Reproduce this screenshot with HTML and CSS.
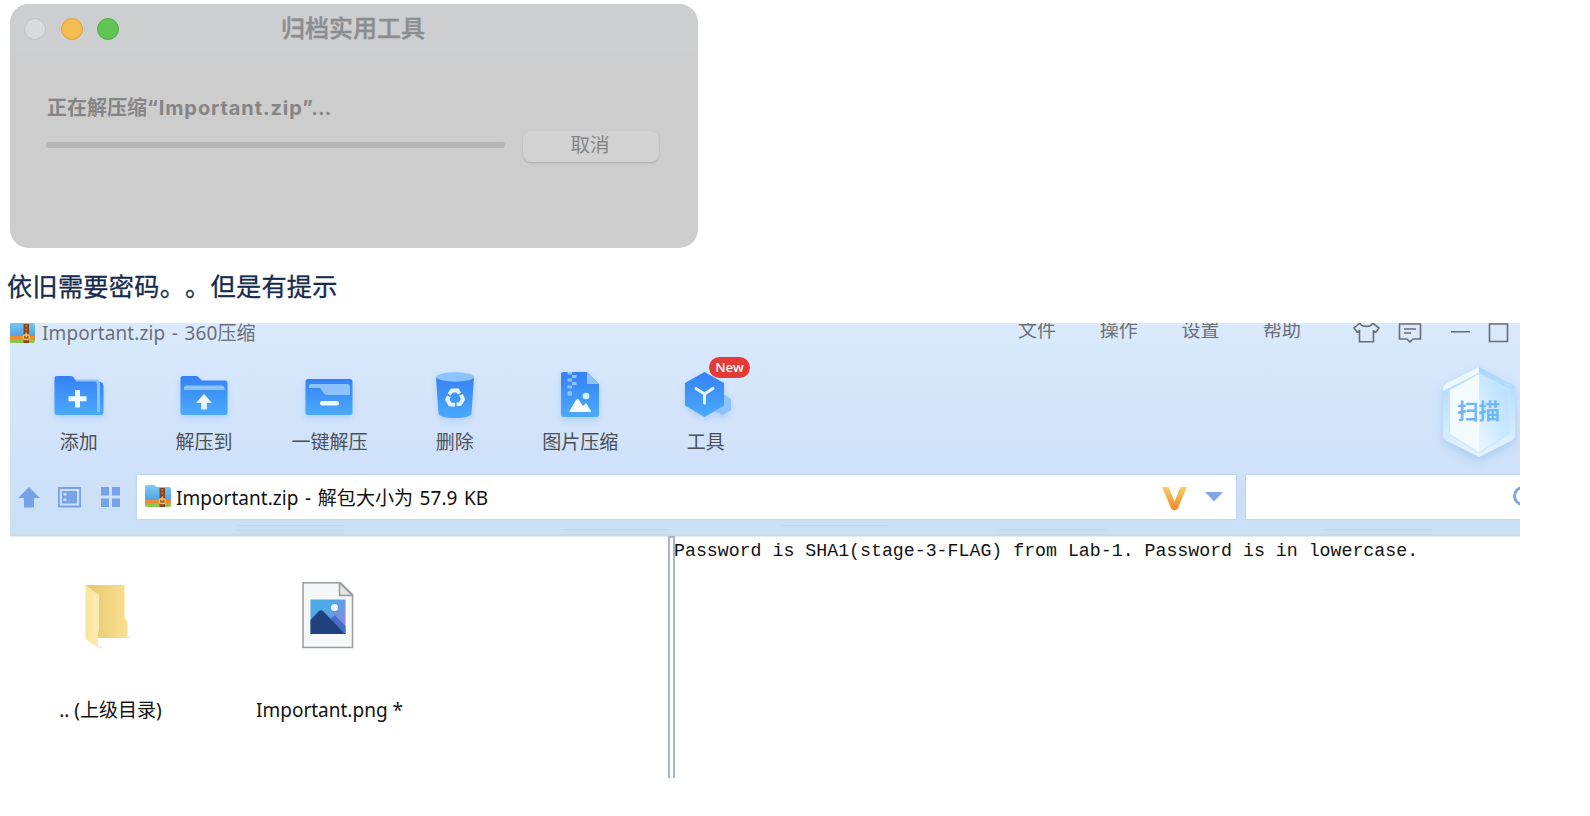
FILE: index.html
```html
<!DOCTYPE html>
<html lang="zh-CN">
<head>
<meta charset="utf-8">
<title>Important.zip</title>
<link rel="stylesheet" href="styles.css">
</head>
<body>
<svg class="defs" width="0" height="0" aria-hidden="true">
  <defs>
    <linearGradient id="blue" x1="0" y1="0" x2="0" y2="1"><stop offset="0" stop-color="#3681f4"/><stop offset="1" stop-color="#4aaafb"/></linearGradient>
    <linearGradient id="sky" x1="0" y1="0" x2="0" y2="1"><stop offset="0" stop-color="#7cccf3"/><stop offset="1" stop-color="#4d9de2"/></linearGradient>
    <linearGradient id="white" x1="0" y1="0" x2="0" y2="1"><stop offset="0" stop-color="#fff"/><stop offset="1" stop-color="#d9efff"/></linearGradient>
    <symbol id="archive" viewBox="0 0 26 22">
      <path d="M0 2Q0 0 2 0H9L12 2H24Q26 2 26 4V17H0Z" fill="url(#sky)"/>
      <path d="M0 15H26V19H0Z" fill="#ee8b36"/>
      <path d="M0 18.500H26V20Q26 22 24 22H2Q0 22 0 20Z" fill="#8dc64a"/>
      <path d="M14.500 3H20V22H14.500Z" fill="#874521"/>
      <path d="M17.200 4V11" stroke="#c48a4b" stroke-width="1.200" stroke-dasharray="2 1.500"/>
      <rect x="14.300" y="14" width="6" height="4.500" rx="1.500" fill="#a8602a" stroke="#f5c468" stroke-width="1.300"/>
      <path d="M17.300 11.500V16" stroke="#f5c468" stroke-width="1.600"/>
    </symbol>
  </defs>
</svg>

<section class="dialog">
  <header class="dialog-bar">
    <div class="lights"><i class="light off"></i><i class="light amber"></i><i class="light green"></i></div>
    <h1 class="dialog-title">归档实用工具</h1>
  </header>
  <p class="message">正在解压缩<span class="latin">“Important.zip”…</span></p>
  <div class="progress-row"><div class="progress"></div><button class="cancel">取消</button></div>
</section>

<p class="note">依旧需要密码。。但是有提示</p>

<section class="window">
  <div class="head">
    <div class="titlebar">
      <svg class="title-icon" width="26" height="22"><use href="#archive"/></svg>
      <span class="title-text">Important.zip - 360压缩</span>
      <nav class="menu"><span>文件</span><span>操作</span><span>设置</span><span>帮助</span></nav>
      <svg class="controls" width="156" height="22" fill="none" stroke="#686d75" stroke-width="1.600">
        <path d="M7 0L1 5L4 9L6.500 8V18.800H20.500V8L23 9L26 5L19.500 0C18.500 4.500 8.500 4.500 7 0Z"/>
        <path d="M46.500 1H67.500V16H60L57 19L54 16H46.500ZM51 6H63M51 10H58"/>
        <path d="M98 8.800H117M136.500 1H154.500V18.500H136.500Z"/>
      </svg>
    </div>
    <div class="main-row">
      <div class="tools">
        <div class="tool"><svg width="50" height="48" viewBox="0 0 50 48">
          <path d="M40 6H47Q49.500 7 49.500 10V36Q49.500 39 47 39H40Z" fill="url(#blue)"/>
          <path d="M20 3.500H43Q46 3.500 46 7V36H20Z" fill="#8cc3fc"/>
          <path d="M.5 2Q.5 0 3 0H17Q19 0 20 2L22.500 5.500H41Q43 5.500 43 8V36Q43 39 46 39H3Q.5 39 .5 36Z" fill="url(#blue)"/>
          <path d="M23.500 14V31.500M14.500 22.800H32.500" stroke="#eefaff" stroke-width="5"/></svg><span>添加</span></div>
        <div class="tool"><svg width="48" height="48" viewBox="0 0 48 48">
          <path d="M.5 2Q.5 0 3 0H17L22 4.500H45Q47.500 4.500 47.500 7V36Q47.500 39 45 39H3Q.5 39 .5 36Z" fill="url(#blue)"/>
          <path d="M4 14V11Q4 9.500 6 9.500H42Q44.500 9.500 44.500 12V14Z" fill="#8cc3fc"/>
          <path d="M24 18L32 27H27V33.500H21V27H16Z" fill="url(#white)"/></svg><span>解压到</span></div>
        <div class="tool"><svg width="48" height="48" viewBox="0 0 48 48">
          <rect x=".5" y="3" width="47" height="36" rx="2.500" fill="url(#blue)"/>
          <path d="M4 12V10Q4 8 6 8H42Q45 8 45 11V19H22Q20 19 18.500 17L15 12Z" fill="#8cc3fc"/>
          <rect x="15" y="25" width="19" height="4.500" rx="2" fill="#eefaff"/></svg><span>一键解压</span></div>
        <div class="tool tall"><svg width="40" height="52" viewBox="0 0 40 52">
          <path d="M1 5H39L36.500 41Q36 46 20 46Q4 46 3.500 41Z" fill="url(#blue)"/>
          <ellipse cx="20" cy="5" rx="19" ry="4.700" fill="#8cc3fc"/>
          <g fill="none" stroke="#e8f7ff" stroke-width="3.900"><path d="M14.200 22.500L17 18.500H22.500L24.500 21.500"/><path d="M14.200 22.500L17 18.500H22.500L24.500 21.500" transform="rotate(120 20 26)"/><path d="M14.200 22.500L17 18.500H22.500L24.500 21.500" transform="rotate(240 20 26)"/></g></svg><span>删除</span></div>
        <div class="tool tall"><svg width="40" height="52" viewBox="0 0 40 52">
          <path d="M1 2Q1 0 3 0H27L39 12V42Q39 45 36.500 45H3.500Q1 45 1 42Z" fill="url(#blue)"/>
          <path d="M27 0L39 12H27Z" fill="#8cc3fc"/>
          <path d="M7.500 1H12M12 4.500H16.500M7.500 8H12M12 11.500H16.500M7.500 15H12" stroke="#8cc3fc" stroke-width="3"/><rect x="7.500" y="19" width="4.500" height="5" rx="1.500" fill="#8cc3fc"/>
          <circle cx="26" cy="24" r="3.300" fill="#d9efff"/><path d="M9 40L16 28Q17.500 26 19 28L23 34L26 31L31 39V40Z" fill="#f5fbff"/></svg><span>图片压缩</span></div>
        <div class="tool tall"><svg class="hex" width="50" height="52" viewBox="0 0 50 52">
          <path d="M34 23L42 23L48 27V38L39.500 43L31 39Z" fill="#8cc3fc"/>
          <path d="M21.500 0L41 11V33.500L21.500 45L2 33.500V11Z" fill="url(#blue)"/>
          <path d="M13 16.500L21.500 22L30 16.500M21.500 22V31" fill="none" stroke="#e5f7ff" stroke-width="3" stroke-linecap="round"/></svg><span>工具</span><b class="badge">New</b></div>
      </div>
      <div class="shield">
        <svg width="74" height="100" viewBox="0 0 74 100">
          <defs><linearGradient id="rim" x1="0" y1="0" x2="0" y2="1"><stop offset="0" stop-color="#a8d6fc"/><stop offset="1" stop-color="#e6f4ff"/></linearGradient>
          <linearGradient id="right" x1="1" y1="0" x2="0" y2="1"><stop offset="0" stop-color="#b1dcff"/><stop offset="1" stop-color="#eaf6ff"/></linearGradient></defs>
          <path d="M37 0L73 19V68Q73 72 69 74L37 90L5 74Q1 71 1 68V21L5 17Z" fill="url(#rim)"/>
          <path d="M37 0L5 16L1 20V24L37 6Z" fill="#eef8ff"/>
          <path d="M37 7L8 23V67L37 86Z" fill="#f4fbff"/>
          <path d="M37 7L67 23V67L37 86Z" fill="url(#right)"/>
          <path d="M37 6.500L7.500 23V67L37 86L67 67V23Z" fill="none" stroke="#c9e6fe" stroke-width="1.200"/>
        </svg><b>扫描</b>
      </div>
    </div>
    <div class="address-row">
      <svg class="nav-icons" width="104" height="22" fill="#76a2e8">
        <path d="M11 0L22 11H16V20.500H6V11H0Z"/>
        <path d="M40.900 1H62.100V19.500H40.900Z" fill="none" stroke="#76a2e8" stroke-width="1.800"/>
        <path d="M44 4H59V16.500H44Z"/><path d="M45.500 6H48.500V8.500H45.500ZM45.500 11.500H48.500V14H45.500Z" fill="#cbdff8"/>
        <path d="M83 0H91V8.500H83ZM94 0H102V8.500H94ZM83 11.500H91V20H83ZM94 11.500H102V20H94Z"/>
      </svg>
      <div class="address">
        <svg width="26" height="22"><use href="#archive"/></svg>
        <span class="address-text">Important.zip - 解包大小为 57.9 KB</span>
        <svg class="address-end" width="64" height="24">
          <defs><linearGradient id="gold" x1="0" y1="0" x2="0" y2="1"><stop offset="0" stop-color="#f8ce60"/><stop offset="1" stop-color="#ef8526"/></linearGradient></defs>
          <path d="M0 0H6.500L12.500 14.500L18.500 0H25L16 21Q12.500 26 9 21Z" fill="url(#gold)"/><path d="M43 5H61L52 14.500Z" fill="#7ea7ea"/>
        </svg>
      </div>
      <div class="search"><svg width="7" height="22"><circle cx="10" cy="10" r="8.500" fill="none" stroke="#7ea7ea" stroke-width="3"/></svg></div>
    </div>
    <div class="head-edge"><svg width="1510" height="15" stroke="#c0d8f0"><path d="M226 6.500H334M226 11.500H334M552 10.500H660M770 6.500H878M988 10.500H1096M1313 10.500H1422"/></svg></div>
  </div>
  <div class="panes">
    <div class="files">
      <div class="file"><svg width="48" height="68" viewBox="0 0 48 68">
        <defs><linearGradient id="fold"><stop offset="0" stop-color="#e6c66d"/><stop offset="1" stop-color="#f9e08f"/></linearGradient><linearGradient id="flap"><stop offset="0" stop-color="#fbe49a"/><stop offset="1" stop-color="#fdebb5"/></linearGradient></defs>
        <path d="M13 64L18 65L14 67ZM42 55L47 54L43 57Z" fill="#e6e6e8"/>
        <path d="M.5 3H39.500V36L42.500 39V56H12V15Z" fill="url(#fold)"/><path d="M.5 3L14 13V49L13 50V66L.5 57Z" fill="url(#flap)"/></svg>
        <span>.. (上级目录)</span></div>
      <div class="file"><svg width="52" height="68" viewBox="0 0 52 68">
        <defs><linearGradient id="photo" x1="0" y1="0" x2="1" y2="1"><stop offset=".35" stop-color="#4fa9e6"/><stop offset="1" stop-color="#a27ad4"/></linearGradient></defs>
        <path d="M1 .8H38.500L50.500 12.500V65.500H1Z" fill="#f6f7f9" stroke="#999c9e" stroke-width="1.500"/>
        <path d="M37.500 .8V13.500H50.500Z" fill="#e5e6e7" stroke="#999c9e" stroke-width="1.500"/>
        <path d="M8.500 17.500H43.500V52H8.500Z" fill="url(#photo)"/><path d="M25 41L32.500 33L43.500 44V52H25Z" fill="#4b6bc9"/><path d="M8.500 38L17 29Q19 27.500 21 29L43 52H8.500Z" fill="#1f4180"/><circle cx="32.500" cy="25.500" r="3.500" fill="#edf5fc"/></svg>
        <span>Important.png *</span></div>
    </div>
    <div class="splitter"></div>
    <pre class="preview">Password is SHA1(stage-3-FLAG) from Lab-1. Password is in lowercase.</pre>
  </div>
</section>
</body>
</html>
```
FILE: styles.css
```css
* { box-sizing: border-box; }
body { margin: 0; padding: 4px 10px 0; height: 816px; overflow: hidden; background: #fff; font-family: "Noto Sans", "Noto Sans CJK SC", sans-serif; }
svg { display: block; flex: none; }
.defs { position: absolute; }
h1, p, pre { margin: 0; }

.dialog { width: 688px; height: 244px; border-radius: 19px; background: #cdcdcd; overflow: hidden; }
.dialog-bar { display: grid; grid-template-columns: 199px 1fr 201px; height: 50px; background: #cdced0; }
.lights { display: flex; align-items: center; gap: 14.500px; padding-left: 14px; }
.light { width: 22px; height: 22px; border-radius: 50%; border: 1px solid; }
.off { background: #d9dadc; border-color: #bfc0c2; }
.amber { background: #f5bd4f; border-color: #dfa239; }
.green { background: #61c554; border-color: #4eae42; }
.dialog-title { color: #8c8d8e; font: 500 24px/45px "Noto Sans CJK SC", sans-serif; text-align: center; -webkit-text-stroke: .4px; }
.message { margin: 38px 0 0 37px; font: 700 20px/30px "Noto Sans CJK SC", sans-serif; color: #858585; white-space: nowrap; }
.latin { font-family: Inter, sans-serif; font-weight: 700; letter-spacing: .9px; }
.progress-row { display: flex; align-items: center; gap: 18px; margin: 8px 0 0 36px; }
.progress { width: 459px; height: 6px; margin-top: -3px; border-radius: 3px; background: #b5b5b5; }
.cancel { width: 136px; height: 31px; padding: 0 2px 5px 0; border: 0; border-radius: 8px; background: #d2d2d2; box-shadow: 0 1px 2px #aaa; color: #858585; font: 19.500px/26px "Noto Sans CJK SC", sans-serif; }

.note { height: 75px; margin-left: -3px; padding-top: 17px; color: #172b4d; font: 400 25.200px/40px "Noto Sans CJK SC", sans-serif; letter-spacing: .25px; text-spacing-trim: space-all; -webkit-text-stroke: .3px; }

.window { width: 1510px; height: 455px; overflow: hidden; }
.head { height: 213px; background: linear-gradient(#daeafc, #d2e3fa 50%, #c8dff6); }
.titlebar { display: flex; height: 23px; color: #6b7077; font-size: 19px; line-height: 20px; }
.title-icon { margin: -2px 1px 0 -1px; }
.title-text { width: 982px; padding-left: 6px; letter-spacing: .1px; word-spacing: 1.500px; white-space: nowrap; }
.menu { display: grid; grid-template-columns: repeat(4, 81.700px); width: 335px; line-height: 15px; }
.main-row { display: flex; justify-content: space-between; height: 129px; }
.tools { display: grid; grid-template-columns: repeat(6, 125.400px); padding: 30px 0 0 6px; }
.tool { position: relative; display: flex; flex-direction: column; align-items: center; color: #4b5057; font-size: 19px; line-height: 26px; white-space: nowrap; }
.tool svg { margin-bottom: 5px; filter: drop-shadow(0 3px 3px #b0d0f7); }
.tool.tall svg { margin-top: -4px; }
.tool .hex { margin-left: 4px; }
.badge { position: absolute; left: 66px; top: -19px; width: 41px; height: 21px; border-radius: 11px; background: #e43b38; color: #fff; font: 500 13.300px/21px "Noto Sans", sans-serif; text-align: center; }
.shield { display: grid; width: 78px; padding-top: 21px; }
.shield svg, .shield b { grid-area: 1 / 1; }
.shield svg { filter: drop-shadow(0 4px 5px #abcdf3); }
.shield b { z-index: 1; padding: 28px 0 0 15px; color: #6eb7fb; font-size: 21.500px; line-height: 32px; }
.address-row { display: flex; height: 44px; }
.nav-icons { width: 119px; margin: 12px 0 0 8px; }
.address { display: flex; width: 1099px; height: 44px; padding: 10px 10px 0 8px; background: #fff; box-shadow: 0 0 1px 1px #bfd7f0; }
.address-text { flex: 1; padding-left: 5px; color: #111; font-size: 19px; line-height: 26px; letter-spacing: .04px; word-spacing: 1.600px; white-space: nowrap; }
.address-end { margin-top: 2px; }
.search { display: flex; justify-content: flex-end; flex: 1; margin-left: 10px; padding-top: 11px; background: #fff; box-shadow: 0 0 1px 1px #bfd7f0; }
.head-edge { height: 17px; border-bottom: 2px solid #d2d9e2; box-shadow: 0 1px 0 #dceefb; }
.panes { display: flex; height: 242px; }
.files { display: grid; grid-template-columns: 201px 237px; width: 658px; padding-top: 46px; }
.file { display: flex; flex-direction: column; align-items: center; color: #111; font-size: 19px; line-height: 28px; white-space: nowrap; }
.file svg { margin: 0 4px 46px 0; }
.splitter { width: 7px; border: 2px solid #a9b4c6; border-bottom: 0; }
.preview { margin-left: -1px; color: #111; font: 18.240px/30px "Liberation Mono", monospace; }
```
